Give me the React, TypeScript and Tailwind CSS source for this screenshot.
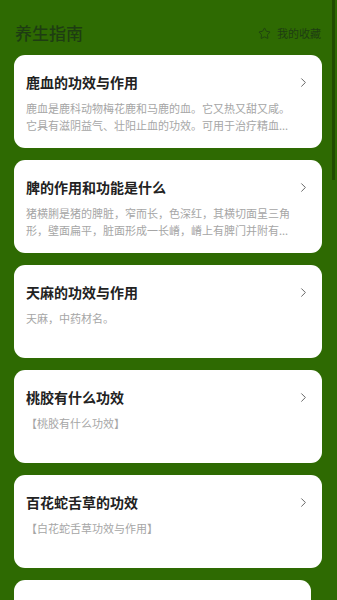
import { ChevronRight, Star } from 'lucide-react'

interface Article {
  title: string
  desc: string
}

// descriptions are stored as they are shown in the list (already shortened)
const articles: Article[] = [
  {
    title: '鹿血的功效与作用',
    desc: '鹿血是鹿科动物梅花鹿和马鹿的血。它又热又甜又咸。它具有滋阴益气、壮阳止血的功效。可用于治疗精血...',
  },
  {
    title: '脾的作用和功能是什么',
    desc: '猪横脷是猪的脾脏，窄而长，色深红，其横切面呈三角形，壁面扁平，脏面形成一长嵴，嵴上有脾门并附有...',
  },
  { title: '天麻的功效与作用', desc: '天麻，中药材名。' },
  { title: '桃胶有什么功效', desc: '【桃胶有什么功效】' },
  { title: '百花蛇舌草的功效', desc: '【白花蛇舌草功效与作用】' },
]

function ArticleCard({ item }: { item: Article }) {
  return (
    <div className="h-[93px] rounded-[11px] bg-white pl-3 pr-[14px] pt-[17px]">
      <div className="flex items-center justify-between">
        <h3 className="text-[14px] leading-[20px] font-bold text-[#222]">{item.title}</h3>
        <ChevronRight size={15} strokeWidth={1.6} className="-mr-[3px] text-[#666]" />
      </div>
      <p className="mt-[8px] pr-2 text-[11px] leading-[17px] text-[#a6a6a6]">{item.desc}</p>
    </div>
  )
}

export default function App() {
  return (
    <div
      className="relative h-[600px] w-[337px] overflow-hidden bg-[#2e6a02]"
      style={{ fontFamily: '"Noto Sans CJK SC", "Noto Sans", sans-serif' }}
    >
      {/* scrollbar thumb */}
      <div className="absolute right-[2px] top-0 h-[180px] w-[3px] bg-[#1f4c00]" />

      <div className="flex items-center justify-between pl-[15px] pr-[16px] pt-[22px] pb-[11px]">
        <h1 className="text-[17px] leading-[22px] font-medium text-[#1e3d12]">养生指南</h1>
        <div className="flex items-center gap-[6px] text-[#1e3d12]">
          <Star size={13} strokeWidth={1.6} />
          <span className="text-[11px] leading-[14px]">我的收藏</span>
        </div>
      </div>

      <div className="flex flex-col gap-3 pl-[14px] pr-[15px]">
        {articles.map((a) => (
          <ArticleCard key={a.title} item={a} />
        ))}
        <div className="h-[93px] w-[297px] rounded-[11px] bg-white" />
      </div>
    </div>
  )
}
